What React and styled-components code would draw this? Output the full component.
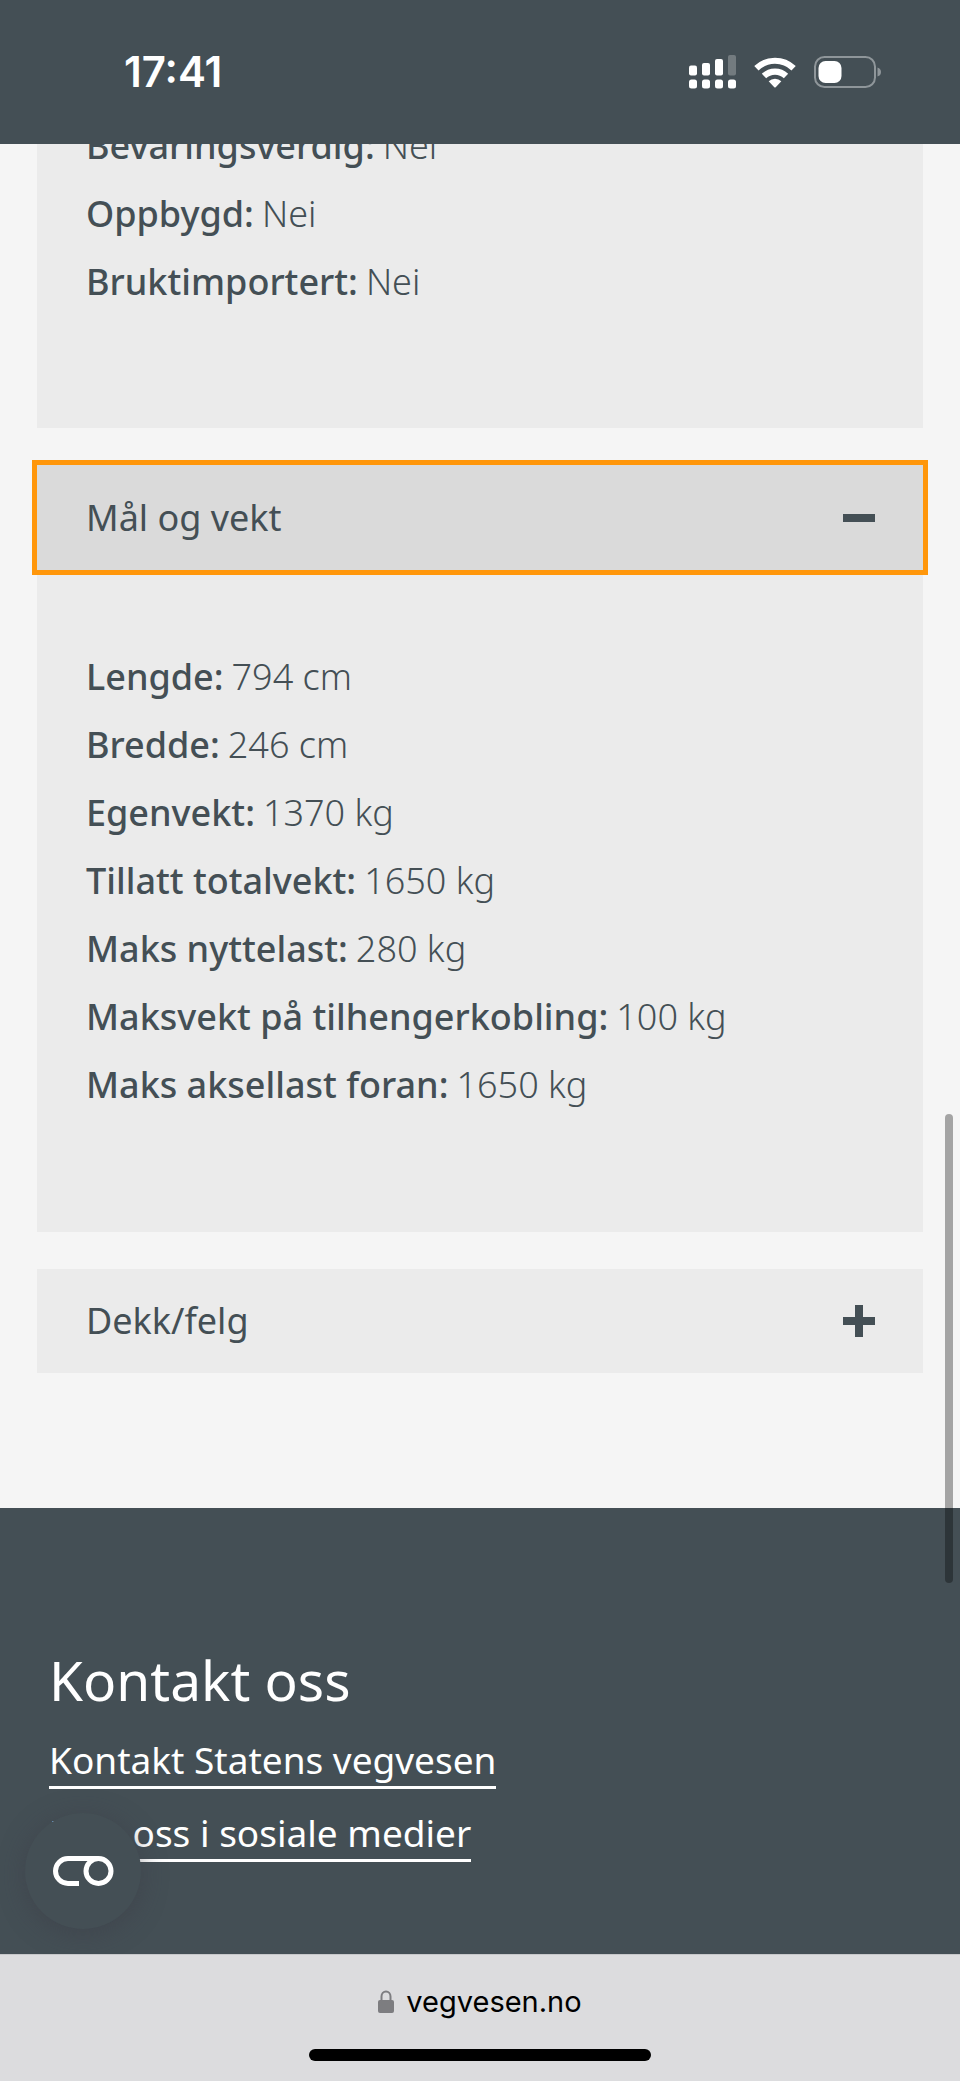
import React, { useState } from "react";
import styled, { createGlobalStyle, ThemeProvider } from "styled-components";

const theme = {
  slate: "#444f55",
  page: "#f5f5f5",
  panel: "#ebebeb",
  active: "#dadada",
  focus: "#ff960a",
  text: "#444f55",
  font: '"Noto Sans", "Liberation Sans", sans-serif',
  system: 'Inter, "Liberation Sans", sans-serif',
};

const GlobalStyle = createGlobalStyle`
  *, *::before, *::after { box-sizing: border-box; }
  body { margin: 0; background: ${theme.page}; }
`;

const Screen = styled.div`
  position: relative;
  display: flex;
  flex-direction: column;
  min-height: 100vh;
  background: ${(p) => p.theme.page};
  color: ${(p) => p.theme.text};
  font-family: ${(p) => p.theme.font};
  font-size: 36px;
`;

const StatusBar = styled.header`
  position: sticky;
  top: 0;
  z-index: 3;
  display: flex;
  align-items: center;
  justify-content: space-between;
  height: 144px;
  padding: 0 79px 0 124px;
  background: ${(p) => p.theme.slate};
  color: #fff;
`;

const Clock = styled.time`
  font: 600 42px/48px ${(p) => p.theme.system};
`;

const StatusIcons = styled.div`
  display: flex;
  align-items: center;
  gap: 18px;
  svg { display: block; }
`;

const Content = styled.main`
  display: flex;
  flex-direction: column;
  gap: 37px;
  padding: 0 37px 135px;
`;

const Section = styled.section`
  display: flex;
  flex-direction: column;
`;

const SectionTitle = styled.h2`
  margin: 0;
  font-weight: 400;
`;

const Toggle = styled.button`
  position: relative;
  z-index: 1;
  display: flex;
  align-items: center;
  justify-content: space-between;
  width: 100%;
  height: ${(p) => (p.$open ? 105 : 104)}px;
  padding: 0 48px 0 49px;
  border: 0;
  border-radius: 0;
  background: ${(p) => (p.$open ? p.theme.active : p.theme.panel)};
  color: inherit;
  font: 400 36px/48px ${(p) => p.theme.font};
  text-align: left;
  cursor: pointer;
  outline: ${(p) => (p.$open ? `5px solid ${p.theme.focus}` : "none")};
  svg { display: block; }
`;

const Panel = styled.div`
  padding: 73px 49px 113px;
  background: ${(p) => p.theme.panel};
`;

/* Panel whose beginning has scrolled up under the status bar. */
const ScrolledPanel = styled(Panel)`
  display: flex;
  flex-direction: column;
  justify-content: flex-end;
  height: 284px;
  padding: 0 49px 112px;
`;

const Facts = styled.dl`
  margin: 0;
`;

const Fact = styled.div`
  display: flex;
  gap: 8px;
  line-height: 68px;
`;

const Label = styled.dt`
  font-weight: 500;
`;

const Value = styled.dd`
  margin: 0;
  font-weight: 300;
`;

const Footer = styled.footer`
  flex: 1;
  padding: 136px 49px 92px;
  background: ${(p) => p.theme.slate};
  color: #fff;
`;

const FooterTitle = styled.h2`
  margin: 0 0 18px;
  font-size: 55px;
  font-weight: 400;
  line-height: 72px;
`;

const LinkList = styled.ul`
  display: flex;
  flex-direction: column;
  align-items: flex-start;
  gap: 18px;
  margin: 0;
  padding: 0;
  list-style: none;
`;

const FooterLink = styled.a`
  display: block;
  border-bottom: 3px solid #fff;
  color: #fff;
  font-size: 37px;
  line-height: 52px;
  text-decoration: none;
`;

const ConsentButton = styled.button`
  position: fixed;
  left: 25px;
  bottom: 152px;
  z-index: 2;
  display: flex;
  align-items: center;
  justify-content: center;
  width: 116px;
  height: 116px;
  padding: 0;
  border: 0;
  border-radius: 50%;
  background: ${(p) => p.theme.slate};
  box-shadow: 0 4px 24px rgba(60, 60, 70, 0.5);
  cursor: pointer;
`;

const ScrollThumb = styled.div`
  position: absolute;
  top: 1114px;
  right: 7px;
  z-index: 2;
  width: 8px;
  height: 469px;
  border-radius: 4px;
  background: rgba(0, 0, 0, 0.33);
`;

const BrowserBar = styled.nav`
  position: sticky;
  bottom: 0;
  z-index: 3;
  display: flex;
  flex-direction: column;
  align-items: center;
  justify-content: space-between;
  height: 127px;
  padding: 29px 0 20px;
  border-top: 1px solid #c6c7c9;
  background: #dcdcde;
`;

const Address = styled.div`
  display: flex;
  align-items: center;
  gap: 12px;
  color: #000;
  font: 400 29px/36px ${(p) => p.theme.system};
`;

const HomeIndicator = styled.div`
  width: 342px;
  height: 12px;
  border-radius: 6px;
  background: #000;
`;

function SignalIcon() {
  return (
    <svg width="47" height="34" viewBox="0 0 47 34" fill="#fff" aria-hidden="true">
      <rect x="0" y="10.500" width="8" height="10" rx="2" />
      <rect x="13" y="8" width="8" height="12.500" rx="2" />
      <rect x="26" y="4" width="8" height="16.500" rx="2" />
      <rect x="39" y="0" width="8" height="20.500" rx="2" opacity="0.25" />
      {[0, 13, 26, 39].map((x) => (
        <rect key={x} x={x} y="24.500" width="8" height="9" rx="2.500" />
      ))}
    </svg>
  );
}

function WifiIcon() {
  return (
    <svg width="42" height="31" viewBox="0 0 42 31" aria-hidden="true">
      <g fill="none" stroke="#fff" strokeWidth="6.200">
        <path d="M2.400 11.200A27 27 0 0 1 39.600 11.200" />
        <path d="M10 19A15.800 15.800 0 0 1 32 19" />
      </g>
      <path d="M14.700 24.300A9 9 0 0 1 27.300 24.300L21.700 30.200Q21 30.800 20.300 30.200Z" fill="#fff" />
    </svg>
  );
}

function BatteryIcon() {
  return (
    <svg width="67" height="32" viewBox="0 0 67 32" aria-hidden="true">
      <rect x="1" y="1" width="60" height="30" rx="9.500" fill="none" stroke="#8f969a" strokeWidth="2" />
      <path d="M63.500 11.500Q67 12.500 67 16T63.500 20.500Z" fill="#8f969a" />
      <rect x="4.500" y="5" width="23" height="22" rx="7" fill="#fff" />
    </svg>
  );
}

function ToggleIcon({ open }) {
  return (
    <svg width="32" height="32" viewBox="0 0 32 32" fill="currentColor" aria-hidden="true">
      <rect x="0" y="12" width="32" height="8" />
      {!open && <rect x="12" y="0" width="8" height="32" />}
    </svg>
  );
}

function ConsentIcon() {
  return (
    <svg width="61" height="30" viewBox="0 0 61 30" fill="none" stroke="#fff" strokeWidth="5" aria-hidden="true">
      <path d="M26 27.500H15A12.500 12.500 0 0 1 15 2.500H45" />
      <circle cx="45.500" cy="15" r="12.500" />
    </svg>
  );
}

function LockIcon() {
  return (
    <svg width="16" height="24" viewBox="0 0 16 24" aria-hidden="true">
      <path d="M3.500 11V6.500a4.500 5 0 0 1 9 0V11" fill="none" stroke="#7d7d80" strokeWidth="2" />
      <rect x="0" y="10" width="16" height="13" rx="2" fill="#7d7d80" />
    </svg>
  );
}

const history = [
  ["Bevaringsverdig:", "Nei"],
  ["Oppbygd:", "Nei"],
  ["Bruktimportert:", "Nei"],
];

const dimensions = [
  ["Lengde:", "794 cm"],
  ["Bredde:", "246 cm"],
  ["Egenvekt:", "1370 kg"],
  ["Tillatt totalvekt:", "1650 kg"],
  ["Maks nyttelast:", "280 kg"],
  ["Maksvekt på tilhengerkobling:", "100 kg"],
  ["Maks aksellast foran:", "1650 kg"],
];

function FactList({ items }) {
  return (
    <Facts>
      {items.map(([label, value]) => (
        <Fact key={label}>
          <Label>{label}</Label>
          <Value>{value}</Value>
        </Fact>
      ))}
    </Facts>
  );
}

function Accordion({ title, initiallyOpen = false, children }) {
  const [open, setOpen] = useState(initiallyOpen);
  return (
    <Section>
      <SectionTitle>
        <Toggle type="button" $open={open} aria-expanded={open} onClick={() => setOpen(!open)}>
          {title}
          <ToggleIcon open={open} />
        </Toggle>
      </SectionTitle>
      {open && children && <Panel>{children}</Panel>}
    </Section>
  );
}

export default function App() {
  return (
    <ThemeProvider theme={theme}>
      <GlobalStyle />
      <Screen>
        <StatusBar>
          <Clock>17:41</Clock>
          <StatusIcons>
            <SignalIcon />
            <WifiIcon />
            <BatteryIcon />
          </StatusIcons>
        </StatusBar>
        <Content>
          <ScrolledPanel>
            <FactList items={history} />
          </ScrolledPanel>
          <Accordion title="Mål og vekt" initiallyOpen>
            <FactList items={dimensions} />
          </Accordion>
          <Accordion title="Dekk/felg" />
        </Content>
        <Footer>
          <FooterTitle>Kontakt oss</FooterTitle>
          <LinkList>
            <li><FooterLink href="#kontakt">Kontakt Statens vegvesen</FooterLink></li>
            <li><FooterLink href="#sosiale-medier">Følg oss i sosiale medier</FooterLink></li>
          </LinkList>
        </Footer>
        <ConsentButton type="button" aria-label="Personvern">
          <ConsentIcon />
        </ConsentButton>
        <ScrollThumb />
        <BrowserBar>
          <Address>
            <LockIcon />
            vegvesen.no
          </Address>
          <HomeIndicator />
        </BrowserBar>
      </Screen>
    </ThemeProvider>
  );
}
